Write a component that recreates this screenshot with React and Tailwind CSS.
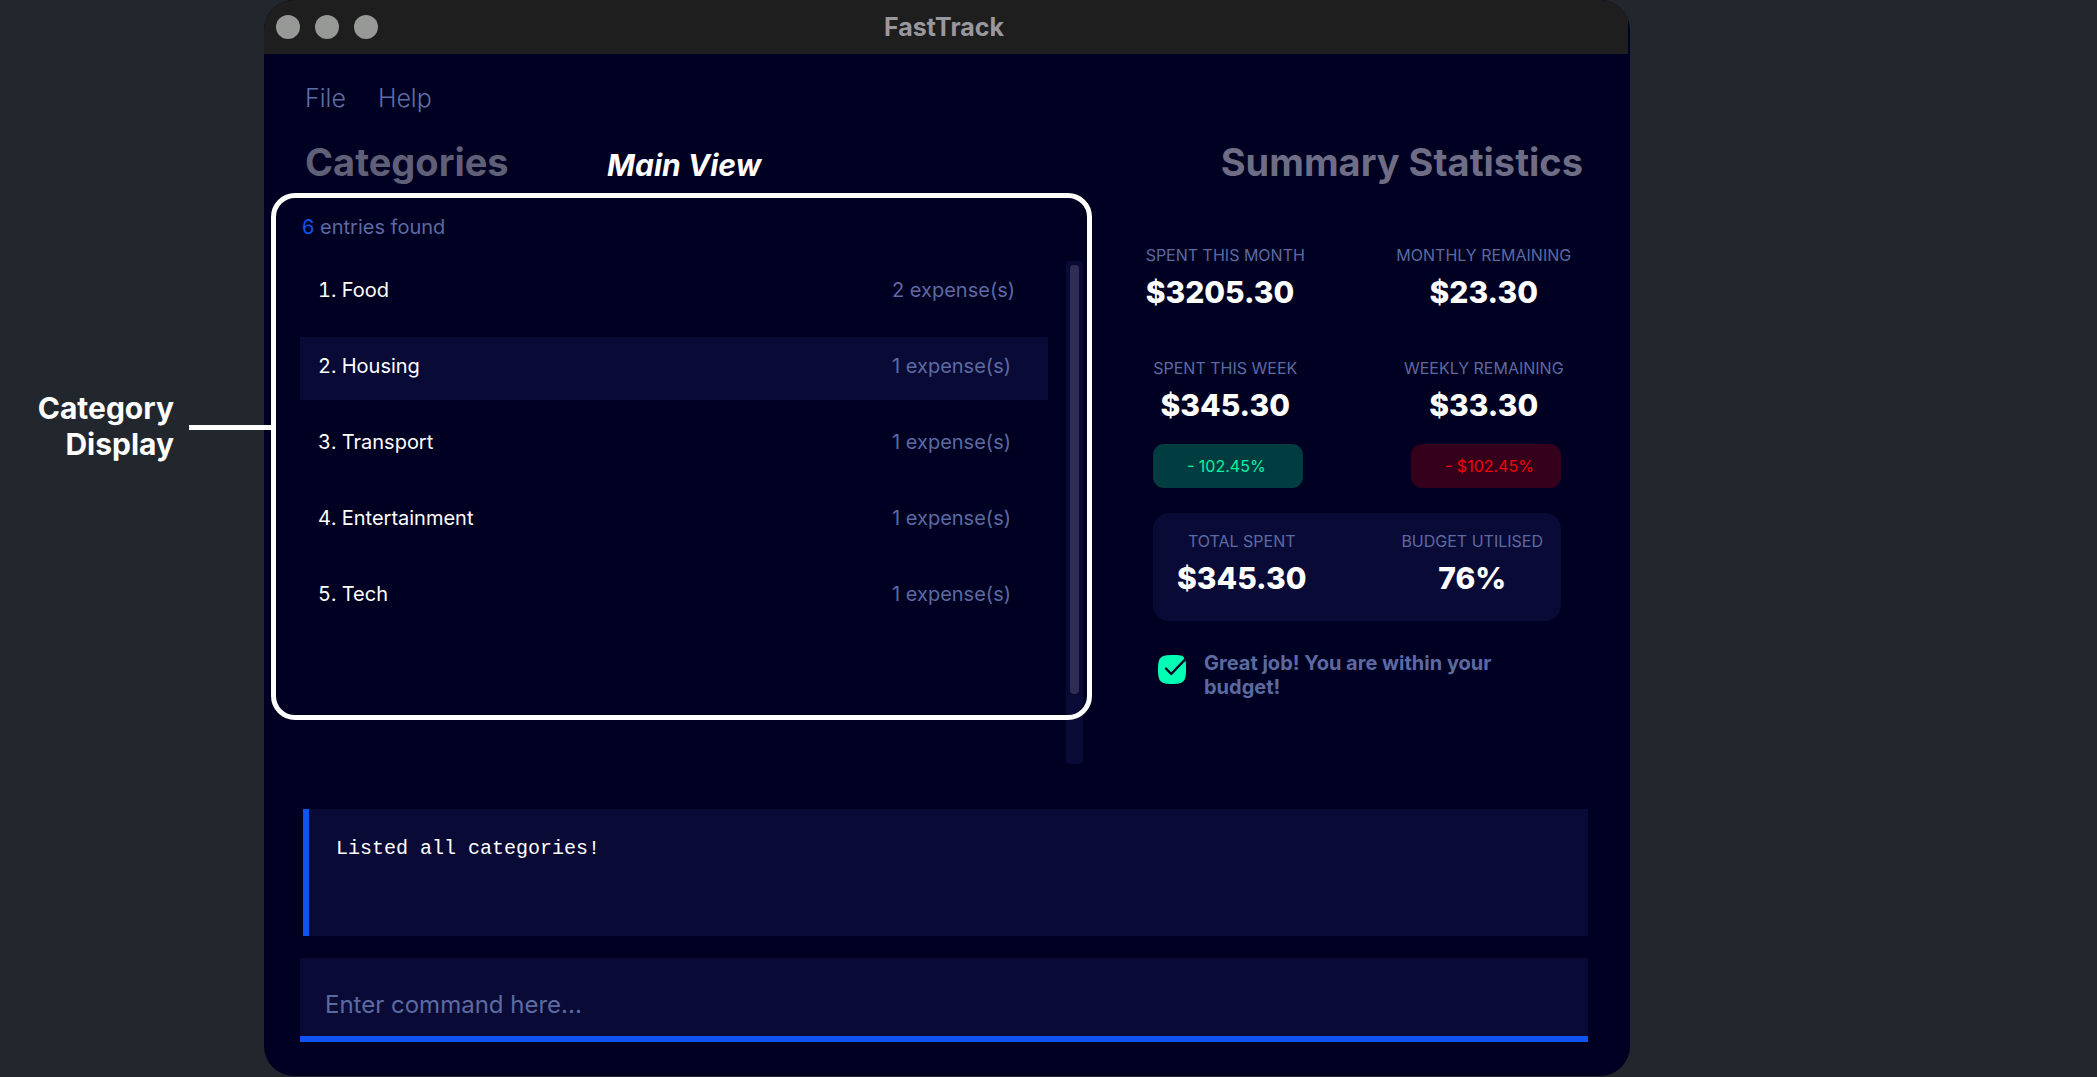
const categories = [
  { name: "Food", count: 2 },
  { name: "Housing", count: 1, selected: true },
  { name: "Transport", count: 1 },
  { name: "Entertainment", count: 1 },
  { name: "Tech", count: 1 },
];

function Stat({ label, value, align = "items-center" }) {
  return (
    <div className="flex justify-center">
      <dl className={`flex flex-col ${align} whitespace-nowrap`}>
        <dt className="text-[16px] leading-5 text-[#5c6aa2]">{label}</dt>
        <dd className="mt-[9px] text-[30px] leading-9 font-extrabold text-white">{value}</dd>
      </dl>
    </div>
  );
}

function TitleBar() {
  return (
    <header className="relative mr-0.5 flex h-[54px] items-center justify-center bg-[#1e1e1e] pr-1">
      <div className="absolute left-3 flex gap-[15px]">
        <button aria-label="Close" className="size-6 rounded-full bg-[#979997]" />
        <button aria-label="Minimise" className="size-6 rounded-full bg-[#979997]" />
        <button aria-label="Zoom" className="size-6 rounded-full bg-[#979997]" />
      </div>
      <h1 className="text-[25px] leading-8 font-bold text-[#99989d]">FastTrack</h1>
    </header>
  );
}

function CategoryPanel() {
  return (
    <section aria-label="Category list" className="relative pt-[22px] pl-9">
      <p className="pl-0.5 text-[20px] leading-6 text-[#5c6aa2]">
        <span className="text-[#1053f3]">6</span> entries found
      </p>
      <div className="mt-[22px] flex gap-[18px] pr-[9px]">
        <ul className="flex flex-1 flex-col gap-[13px]">
          {categories.map((c, i) => (
            <li
              key={c.name}
              className={`flex h-[63px] justify-between pt-[17px] pl-[18px] text-[20px] leading-6 ${
                c.selected ? "bg-[#0a0a37]" : ""
              }`}
            >
              <span className="text-white tabular-nums">
                {i + 1}. {c.name}
              </span>
              <span className="w-[156px] text-[#5c6aa2]">{c.count} expense(s)</span>
            </li>
          ))}
        </ul>
        <div className="h-[503px] w-[17px] rounded bg-[#0a0a37] px-1 pt-1">
          <div className="h-[429px] rounded bg-[#302d55]" />
        </div>
      </div>
      <div className="pointer-events-none absolute top-0 right-0 left-[7px] h-[527px] rounded-[24px] border-5 border-white">
        <div className="absolute top-[227px] right-full h-[5px] w-[87px] bg-white" />
      </div>
    </section>
  );
}

function Statistics() {
  return (
    <section aria-label="Summary statistics" className="pt-[52px]">
      <div className="mr-[17px] ml-1 grid grid-cols-2 gap-y-12">
        <Stat label="SPENT THIS MONTH" value="$3205.30" align="items-start" />
        <Stat label="MONTHLY REMAINING" value="$23.30" />
        <Stat label="SPENT THIS WEEK" value="$345.30" />
        <Stat label="WEEKLY REMAINING" value="$33.30" />
      </div>
      <div className="mr-[69px] ml-[61px]">
        <div className="mt-[21px] flex justify-between text-[16px]">
          <div className="h-11 w-[150px] rounded-[11px] bg-[#003c40] pl-[34px] leading-[44px] text-[#00f5a4]">
            - 102.45%
          </div>
          <div className="h-11 w-[150px] rounded-[11px] bg-[#34001c] pl-[34px] leading-[44px] text-[#f40006]">
            - $102.45%
          </div>
        </div>
        <div className="mt-[25px] flex justify-between rounded-2xl bg-[#0a0a37] pt-[18px] pr-[18px] pb-[25px] pl-6">
          <Stat label="TOTAL SPENT" value="$345.30" />
          <Stat label="BUDGET UTILISED" value="76%" />
        </div>
        <div className="mt-[30px] flex gap-[18px] pl-[5px]">
          <svg viewBox="0 0 28 29" className="mt-1 h-[29px] w-7 shrink-0" aria-hidden="true">
            <path
              d="M14 0C23 0 24 .4 25.600 2L27.400 5C28 8 28 10 28 14.500C28 26 26 29 14 29S0 26 0 14.500S2 0 14 0Z"
              fill="#00ffb2"
            />
            <path d="M8 13.500L13.200 19L27.500 4" fill="none" stroke="#000022" strokeWidth="2.400" strokeLinecap="round" strokeLinejoin="round" />
          </svg>
          <p className="w-[300px] text-[20px] leading-6 font-bold text-[#5c6aa2]">
            Great job! You are within your budget!
          </p>
        </div>
      </div>
    </section>
  );
}

export default function App() {
  return (
    <div className="grid min-h-screen grid-cols-[264px_1366fr_467fr] items-start bg-[#22272e] font-['Inter',sans-serif]">
      <aside className="pt-[390px] pr-[90px] text-right text-[30px] leading-9 font-bold text-white">
        Category Display
      </aside>
      <main className="min-w-0 rounded-[30px] bg-[#000022] pb-[34px]">
        <div className="overflow-hidden rounded-t-[30px]">
          <TitleBar />
        </div>
        <nav className="flex gap-8 pt-7 pl-[41px] text-[25px] leading-8 font-light text-[#5f6da6]">
          <button>File</button>
          <button>Help</button>
        </nav>
        <div className="flex items-baseline pt-[25px] pr-[47px] pl-[41px] font-bold">
          <h2 className="w-[302px] text-[38px] leading-[46px] text-[#605f78]">Categories</h2>
          <p className="text-[30px] leading-9 text-white italic">Main View</p>
          <h2 className="ml-auto text-[38px] leading-[46px] text-[#6e6d85]">Summary Statistics</h2>
        </div>
        <div className="mt-2 grid grid-cols-[828fr_538fr]">
          <CategoryPanel />
          <Statistics />
        </div>
        <div className="mt-[45px] pr-[42px] pl-9">
          <div className="ml-[3px] h-[127px] border-l-6 border-[#1053f3] bg-[#0a0a37] pt-7 pl-[27px]">
            <output className="block font-['Liberation_Mono',monospace] text-[20px] leading-6 text-white">
              Listed all categories!
            </output>
          </div>
          <input
            type="text"
            aria-label="Command"
            placeholder="Enter command here..."
            className="mt-[22px] block h-[84px] w-full border-b-6 border-[#1053f3] bg-[#0a0a37] pt-[15px] pl-[25px] text-[24px] text-white outline-none placeholder:text-[#5c6aa2]"
          />
        </div>
      </main>
    </div>
  );
}
